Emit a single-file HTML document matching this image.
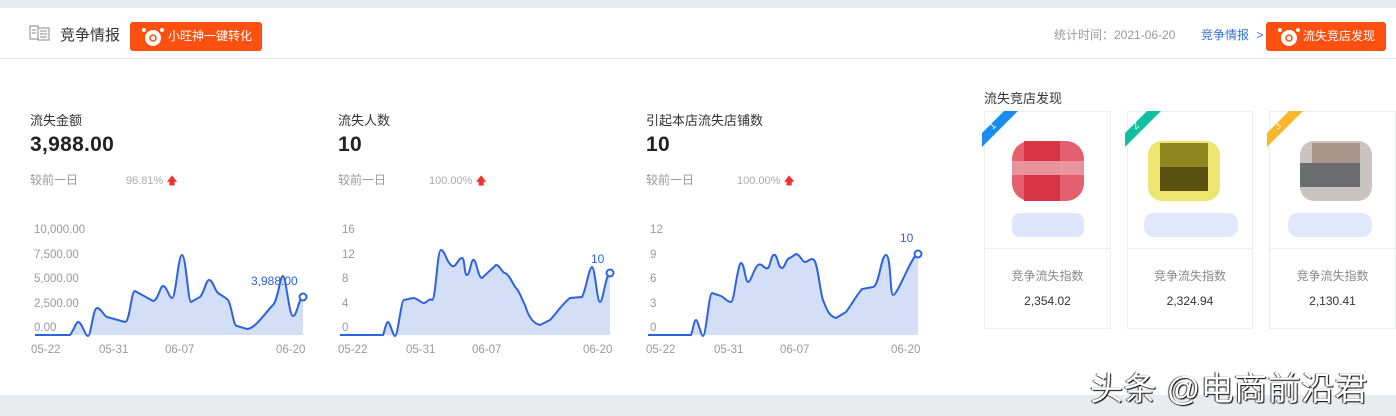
<!DOCTYPE html>
<html><head><meta charset="utf-8"><style>
*{margin:0;padding:0;box-sizing:border-box}
body{width:1396px;height:416px;background:#e9ebef;font-family:"Liberation Sans","Noto Sans CJK SC",sans-serif;position:relative;overflow:hidden;color:#333}
.panel{position:absolute;left:0;top:8px;width:1396px;height:387px;background:#fff}
.hdr{position:absolute;left:0;top:58px;width:1396px;height:1px;background:#e4e6ea}
.a{position:absolute;white-space:nowrap}
.btn{position:absolute;background:#fc5010;border-radius:3px;color:#fff;font-size:12px;height:29px;line-height:29px}
.lbl{font-size:13px;color:#333}
.big{font-size:21px;font-weight:bold;color:#222;font-family:"Liberation Sans",sans-serif;letter-spacing:0.3px}
.sm{font-size:12px;color:#999}
.pc{font-size:11px;color:#aaa}
.card{position:absolute;top:111px;height:218px;border:1px solid #eceef1;background:#fff}
.card .div{position:absolute;left:0;right:0;top:136px;height:1px;background:#eceef1}
.card .t{position:absolute;left:0;right:0;top:155px;text-align:center;font-size:12px;color:#888}
.card .v{position:absolute;left:0;right:0;top:182px;text-align:center;font-size:12px;color:#333}
.ax{font-size:11.5px;fill:#999;font-family:"Liberation Sans",sans-serif}
</style></head><body>
<div class="panel"></div>
<div class="hdr"></div>
<svg class="a" style="left:29px;top:25px" width="22" height="16"><rect x="1" y="1" width="8" height="13" fill="#fff" stroke="#888"/><rect x="9" y="3" width="11" height="12" fill="#fff" stroke="#888"/><path d="M3 5h4M3 8h4M11 6h7M11 9h7M11 12h7" stroke="#888"/></svg>
<div class="a" style="left:60px;top:24px;font-size:15px;color:#333">竞争情报</div>
<div class="btn" style="left:130px;top:22px;width:132px"><svg class="a" style="left:11px;top:4px" width="24" height="22"><circle cx="12" cy="12" r="8" fill="#fff"/><circle cx="12" cy="12" r="3" fill="none" stroke="#fc5010" stroke-width="1.5"/><circle cx="3" cy="4" r="2" fill="#fff"/><circle cx="21" cy="4" r="2" fill="#fff"/></svg><span class="a" style="left:38px;top:0">小旺神一键转化</span></div>
<div class="a sm" style="left:1054px;top:26px;color:#999">统计时间：2021-06-20</div>
<div class="a" style="left:1201px;top:26px;font-size:12px;color:#3a6fd8">竞争情报 <span style="margin-left:4px;color:#3a6fd8">&gt;</span></div>
<div class="btn" style="left:1266px;top:22px;width:120px"><svg class="a" style="left:11px;top:4px" width="24" height="22"><circle cx="12" cy="12" r="8" fill="#fff"/><circle cx="12" cy="12" r="3" fill="none" stroke="#fc5010" stroke-width="1.5"/><circle cx="3" cy="4" r="2" fill="#fff"/><circle cx="21" cy="4" r="2" fill="#fff"/></svg><span class="a" style="left:37px;top:0">流失竞店发现</span></div>

<div class="a lbl" style="left:30px;top:110px">流失金额</div>
<div class="a big" style="left:30px;top:133px">3,988.00</div>
<div class="a sm" style="left:30px;top:171px">较前一日</div>
<div class="a pc" style="left:126px;top:172px">96.81% <span style="color:#f03030">🡅</span></div>
<div class="a lbl" style="left:338px;top:110px">流失人数</div>
<div class="a big" style="left:338px;top:133px">10</div>
<div class="a sm" style="left:338px;top:171px">较前一日</div>
<div class="a pc" style="left:429px;top:172px">100.00% <span style="color:#f03030">🡅</span></div>
<div class="a lbl" style="left:646px;top:110px">引起本店流失店铺数</div>
<div class="a big" style="left:646px;top:133px">10</div>
<div class="a sm" style="left:646px;top:171px">较前一日</div>
<div class="a pc" style="left:737px;top:172px">100.00% <span style="color:#f03030">🡅</span></div>

<svg class="a" style="left:0;top:0" width="960" height="416">
<g class="ax">
<text x="34" y="233">10,000.00</text><text x="34" y="258">7,500.00</text><text x="34" y="282">5,000.00</text><text x="34" y="307">2,500.00</text><text x="34" y="331">0.00</text>
<text x="31" y="353">05-22</text><text x="99" y="353">05-31</text><text x="165" y="353">06-07</text><text x="276" y="353">06-20</text>
<text x="342" y="233">16</text><text x="342" y="258">12</text><text x="342" y="282">8</text><text x="342" y="307">4</text><text x="342" y="331">0</text>
<text x="338" y="353">05-22</text><text x="406" y="353">05-31</text><text x="472" y="353">06-07</text><text x="583" y="353">06-20</text>
<text x="650" y="233">12</text><text x="650" y="258">9</text><text x="650" y="282">6</text><text x="650" y="307">3</text><text x="650" y="331">0</text>
<text x="646" y="353">05-22</text><text x="714" y="353">05-31</text><text x="780" y="353">06-07</text><text x="891" y="353">06-20</text>
</g>
<g fill="#d2dff7" stroke="none">
<path d="M35 335L70 335C74 330 76 322 78 322C82 322 85 336 88 336C91 336 93 308 97 308C101 308 104 316 107 317L125 322C130 322 131 291 135 291L153 301C158 301 160 286 163 286C167 286 169 298 172 298C176 298 178 255 182 255C186 255 188 302 191 302L200 297C204 293 206 280 209 280C213 280 215 291 218 293C224 297 226 298 228 300C232 306 233 326 237 326L247 329C255 329 265 313 273 305C278 300 280 276 283 276C286 276 289 316 293 316C297 316 299 297 303 297L303 335Z"/>
<path d="M340 335L383 335C385 330 386 322 388 322C390 322 393 336 395 336C398 336 401 300 404 300L413 298C417 298 421 303 424 303C427 303 428 298 432 300C436 300 437 250 441 250C445 250 446 262 452 266C456 268 458 258 462 258C465 258 464 275 467 275C470 275 471 258 474 260C477 262 478 278 482 278L496 265C500 265 502 273 505 273C510 275 513 285 516 288C520 292 522 300 525 305C528 315 532 323 540 325L550 320C556 314 562 304 570 298L582 297C586 290 589 267 592 267C595 267 597 302 600 302C603 302 606 273 610 273L610 335Z"/>
<path d="M648 335L691 335C693 330 694 320 696 320C698 320 701 336 703 336C706 336 709 293 712 293L721 296C725 298 727 302 731 302C734 302 736 275 740 264C744 258 745 282 748 282C751 282 754 268 758 265C762 262 764 270 768 268C771 265 771 253 775 255C778 257 778 268 782 268C785 268 786 258 790 258L796 254C800 254 802 262 805 262C808 262 811 257 814 260C818 264 820 292 823 300C827 310 829 316 836 318L846 312C852 304 856 296 862 289L873 287C879 287 881 255 886 255C891 255 890 295 893 295C898 295 912 254 918 254L918 335Z"/>
</g>
<g fill="none" stroke="#2d63e0" stroke-width="2">
<path d="M35 335L70 335C74 330 76 322 78 322C82 322 85 336 88 336C91 336 93 308 97 308C101 308 104 316 107 317L125 322C130 322 131 291 135 291L153 301C158 301 160 286 163 286C167 286 169 298 172 298C176 298 178 255 182 255C186 255 188 302 191 302L200 297C204 293 206 280 209 280C213 280 215 291 218 293C224 297 226 298 228 300C232 306 233 326 237 326L247 329C255 329 265 313 273 305C278 300 280 276 283 276C286 276 289 316 293 316C297 316 299 297 303 297"/>
<path d="M340 335L383 335C385 330 386 322 388 322C390 322 393 336 395 336C398 336 401 300 404 300L413 298C417 298 421 303 424 303C427 303 428 298 432 300C436 300 437 250 441 250C445 250 446 262 452 266C456 268 458 258 462 258C465 258 464 275 467 275C470 275 471 258 474 260C477 262 478 278 482 278L496 265C500 265 502 273 505 273C510 275 513 285 516 288C520 292 522 300 525 305C528 315 532 323 540 325L550 320C556 314 562 304 570 298L582 297C586 290 589 267 592 267C595 267 597 302 600 302C603 302 606 273 610 273"/>
<path d="M648 335L691 335C693 330 694 320 696 320C698 320 701 336 703 336C706 336 709 293 712 293L721 296C725 298 727 302 731 302C734 302 736 275 740 264C744 258 745 282 748 282C751 282 754 268 758 265C762 262 764 270 768 268C771 265 771 253 775 255C778 257 778 268 782 268C785 268 786 258 790 258L796 254C800 254 802 262 805 262C808 262 811 257 814 260C818 264 820 292 823 300C827 310 829 316 836 318L846 312C852 304 856 296 862 289L873 287C879 287 881 255 886 255C891 255 890 295 893 295C898 295 912 254 918 254"/>
</g>
<g fill="#fff" stroke="#2d63e0" stroke-width="2"><circle cx="303" cy="297" r="3.5"/><circle cx="610" cy="273" r="3.5"/><circle cx="918" cy="254" r="3.5"/></g>
<g font-size="12" fill="#2d63e0" font-family="Liberation Sans,sans-serif"><text x="251" y="285">3,988.00</text><text x="591" y="263">10</text><text x="900" y="242">10</text></g>
</svg>

<div class="a lbl" style="left:984px;top:88px">流失竞店发现</div>
<div class="card" style="left:984px;width:127px"><div class="div"></div><div class="t">竞争流失指数</div><div class="v">2,354.02</div></div>
<div class="card" style="left:1127px;width:126px"><div class="div"></div><div class="t">竞争流失指数</div><div class="v">2,324.94</div></div>
<div class="card" style="left:1269px;width:127px"><div class="div"></div><div class="t">竞争流失指数</div><div class="v">2,130.41</div></div>
<svg class="a" style="left:980px;top:107px" width="420" height="140">
<g>
<rect x="32" y="34" width="72" height="60" rx="18" fill="#e3606f"/><rect x="44" y="34" width="36" height="60" fill="#d83448"/><rect x="32" y="54" width="72" height="14" fill="#e9939d"/>
<rect x="168" y="34" width="72" height="60" rx="14" fill="#eee470"/><rect x="180" y="36" width="48" height="48" fill="#8f8620"/><rect x="180" y="60" width="48" height="24" fill="#5a5012"/>
<rect x="320" y="34" width="72" height="60" rx="14" fill="#c9c4c2"/><rect x="320" y="56" width="60" height="24" fill="#6a6c6e"/><rect x="332" y="36" width="48" height="20" fill="#a89488"/>
<rect x="32" y="106" width="72" height="24" rx="8" fill="#dfe5fa"/><rect x="164" y="106" width="94" height="24" rx="10" fill="#e2e8fb"/><rect x="308" y="106" width="84" height="24" rx="10" fill="#e2e8fb"/>
</g>
<g font-size="10" fill="#fff" font-family="Liberation Sans,sans-serif">
<path d="M2 26L24 4L38 4L2 40Z" fill="#1a8cf0"/><text x="9" y="22" transform="rotate(-45 12 18)">1</text>
<path d="M145 26L167 4L181 4L145 40Z" fill="#10c0a0"/><text x="152" y="22" transform="rotate(-45 155 18)">2</text>
<path d="M287 26L309 4L323 4L287 40Z" fill="#fbb62a"/><text x="294" y="22" transform="rotate(-45 297 18)">3</text>
</g>
</svg>
<div class="a" style="left:1090px;top:362px;font-size:33px;letter-spacing:0.5px;color:#fff;text-shadow:1px 1px 1px #000,-1px 0 1px #333">头条 @电商前沿君</div>
</body></html>
